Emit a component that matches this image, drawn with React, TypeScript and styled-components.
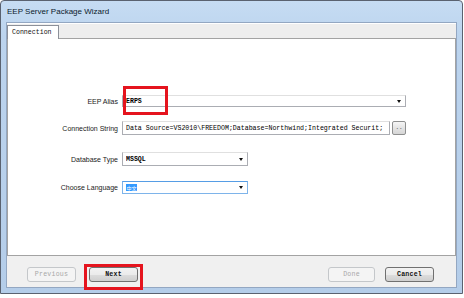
import React from "react";
import styled, { createGlobalStyle } from "styled-components";

const GlobalStyle = createGlobalStyle`
  html, body {
    margin: 0;
    padding: 0;
    background: #ffffff;
  }
  body {
    font-family: "Liberation Sans", Arial, sans-serif;
  }
`;

const Window = styled.div`
  box-sizing: border-box;
  width: 463px;
  height: 294px;
  display: flex;
  flex-direction: column;
  background: linear-gradient(180deg, #c6dcf3 0%, #bcd4ee 12%, #b4cde9 100%);
  border: 1px solid #5a6270;
  border-radius: 4px 4px 0 0;
  padding: 0 5px 5px 5px;
`;

const TitleBar = styled.div`
  height: 21px;
  display: flex;
  align-items: center;
  padding-left: 1px;
  font-size: 8px;
  color: #0c1a2c;
`;

const Client = styled.div`
  flex: 1;
  display: flex;
  flex-direction: column;
  background: #f0f0f0;
  border: 1px solid #93a7c2;
`;

const TabStrip = styled.div`
  height: 14px;
  display: flex;
  align-items: flex-end;
  border-top: 1px solid #ffffff;
  background: #eeeeee;
`;

const Tab = styled.div`
  box-sizing: border-box;
  width: 52px;
  height: 14px;
  margin-bottom: -1px;
  padding-left: 4px;
  display: flex;
  align-items: center;
  background: #ffffff;
  border: 1px solid #8c9099;
  border-bottom: none;
  font-family: "Liberation Mono", monospace;
  font-size: 6.6px;
  color: #111;
  position: relative;
  z-index: 1;
`;

const TabPanel = styled.div`
  box-sizing: border-box;
  height: 218px;
  background: #ffffff;
  border: 1px solid #a3a3a3;
  padding-top: 56px;
  display: flex;
  flex-direction: column;
`;

const Row = styled.div<{ $top: number; $h: number }>`
  display: flex;
  align-items: center;
  margin-top: ${(p) => p.$top}px;
  height: ${(p) => p.$h}px;
  position: relative;
`;

const Label = styled.div`
  width: 110px;
  margin-right: 4px;
  text-align: right;
  font-size: 7px;
  color: #1a1a1a;
`;

const Field = styled.div<{ $w: number; $focus?: boolean }>`
  box-sizing: border-box;
  width: ${(p) => p.$w}px;
  height: 100%;
  display: flex;
  align-items: center;
  padding: 0 4px 0 3px;
  background: #ffffff;
  border: 1px solid ${(p) => (p.$focus ? "#7eb4ea" : "#abadb3")};
  border-top-color: ${(p) => (p.$focus ? "#569de5" : "#e0e0e0")};
  font-family: "Liberation Mono", monospace;
  font-size: 6.6px;
  color: #000;
  white-space: nowrap;
  overflow: hidden;
`;

const FieldText = styled.span<{ $bold?: boolean }>`
  flex: 1;
  font-weight: ${(p) => (p.$bold ? 700 : 400)};
  overflow: hidden;
`;

const Selected = styled.span`
  background: #3399ff;
  color: #ffffff;
  font-family: "Noto Sans CJK SC", sans-serif;
  font-size: 5px;
  line-height: 7px;
  padding: 0 0.5px;
`;

const Arrow = styled.span`
  width: 0;
  height: 0;
  border-left: 2.5px solid transparent;
  border-right: 2.5px solid transparent;
  border-top: 3px solid #111;
`;

const SmallButton = styled.div`
  box-sizing: border-box;
  width: 14px;
  height: 14px;
  margin-left: 2px;
  border: 1px solid #8e8f8f;
  border-radius: 2px;
  background: linear-gradient(180deg, #f6f6f6 0%, #e4e4e4 50%, #d6d6d6 100%);
  display: flex;
  align-items: center;
  justify-content: center;
  font-family: "Liberation Mono", monospace;
  font-size: 6px;
  color: #333;
  padding-bottom: 2px;
`;

const Highlight = styled.div<{ $l: number; $t: number; $w: number; $h: number }>`
  box-sizing: border-box;
  position: absolute;
  left: ${(p) => p.$l}px;
  top: ${(p) => p.$t}px;
  width: ${(p) => p.$w}px;
  height: ${(p) => p.$h}px;
  border: 3px solid #e5141e;
  pointer-events: none;
`;

const Footer = styled.div`
  flex: 1;
  display: flex;
  align-items: flex-start;
  padding: 11px 22px 0 20px;
`;

const Group = styled.div<{ $gap: number }>`
  display: flex;
  gap: ${(p) => p.$gap}px;
`;

const Spacer = styled.div`
  flex: 1;
`;

const ButtonWrap = styled.div`
  position: relative;
`;

const Button = styled.div<{ $disabled?: boolean; $w: number }>`
  box-sizing: border-box;
  width: ${(p) => p.$w}px;
  height: 15px;
  border: 1px solid ${(p) => (p.$disabled ? "#c4c7ca" : "#707070")};
  border-radius: 3px;
  background: ${(p) =>
    p.$disabled
      ? "#f4f4f4"
      : "linear-gradient(180deg, #f2f2f2 0%, #ebebeb 50%, #dddddd 51%, #cfcfcf 100%)"};
  display: flex;
  align-items: center;
  justify-content: center;
  font-family: "Liberation Mono", monospace;
  font-size: 6.6px;
  font-weight: ${(p) => (p.$disabled ? 400 : 700)};
  color: ${(p) => (p.$disabled ? "#a8a8a8" : "#111")};
  letter-spacing: 0.2px;
`;

export default function App() {
  return (
    <>
      <GlobalStyle />
      <Window>
        <TitleBar>EEP Server Package Wizard</TitleBar>
        <Client>
          <TabStrip>
            <Tab>Connection</Tab>
          </TabStrip>
          <TabPanel>
            <Row $top={0} $h={12}>
              <Label>EEP Alias</Label>
              <Field $w={284}>
                <FieldText $bold>ERPS</FieldText>
                <Arrow />
              </Field>
              <Highlight $l={115} $t={-9} $w={45} $h={29} />
            </Row>
            <Row $top={14} $h={14}>
              <Label>Connection String</Label>
              <Field $w={268}>
                <FieldText>
                  Data Source=VS2010\FREEDOM;Database=Northwind;Integrated Securit;
                </FieldText>
              </Field>
              <SmallButton>..</SmallButton>
            </Row>
            <Row $top={17} $h={14}>
              <Label>Database Type</Label>
              <Field $w={126}>
                <FieldText $bold>MSSQL</FieldText>
                <Arrow />
              </Field>
            </Row>
            <Row $top={15} $h={13}>
              <Label>Choose Language</Label>
              <Field $w={126} $focus>
                <FieldText>
                  <Selected>中文</Selected>
                </FieldText>
                <Arrow />
              </Field>
            </Row>
          </TabPanel>
          <Footer>
            <Group $gap={13}>
              <Button $w={49} $disabled>
                Previous
              </Button>
              <ButtonWrap>
                <Button $w={49}>Next</Button>
                <Highlight $l={-5} $t={-3} $w={59} $h={26} />
              </ButtonWrap>
            </Group>
            <Spacer />
            <Group $gap={10}>
              <Button $w={47} $disabled>
                Done
              </Button>
              <Button $w={49}>Cancel</Button>
            </Group>
          </Footer>
        </Client>
      </Window>
    </>
  );
}
